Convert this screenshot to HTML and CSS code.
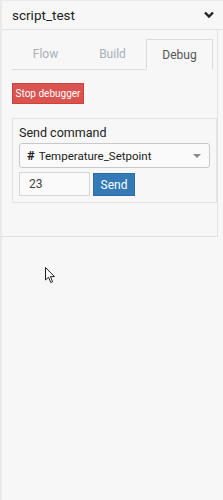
FILE: index.html
```html
<!DOCTYPE html>
<html>
<head>
<meta charset="utf-8">
<link rel="stylesheet" href="styles.css">
</head>
<body>
<div class="app">
  <div class="header">
    <span class="title">script_test</span>
    <svg class="chev" width="10" height="8" viewBox="0 0 10 8"><path d="M1 1.5 L5 5.5 L9 1.5" fill="none" stroke="#222" stroke-width="2.4"/></svg>
  </div>
  <div class="content">
    <div class="tabs">
      <div class="tab">Flow</div>
      <div class="tab">Build</div>
      <div class="tab active">Debug</div>
    </div>
    <div class="btn-row"><button class="btn-stop">Stop debugger</button></div>
    <div class="panel">
      <div class="panel-title">Send command</div>
      <div class="select">
        <span class="hash">#</span><span class="sel-text">Temperature_Setpoint</span>
        <span class="caret"></span>
      </div>
      <div class="send-row">
        <div class="input">23</div>
        <button class="btn-send">Send</button>
      </div>
    </div>
  </div>
  <svg class="cursor" width="12" height="18" viewBox="0 0 12 18"><path d="M0.5 0.5 L0.5 13 L3.5 10.2 L5.8 15.5 L7.6 14.7 L5.4 9.6 L9.5 9.6 Z" fill="#fff" stroke="#222" stroke-width="1"/></svg>
</div>
</body>
</html>
```
FILE: styles.css
```css
html, body {
  margin: 0;
  padding: 0;
  background: #f7f7f7;
}
body {
  font-family: Roboto, "Noto Sans", sans-serif;
  color: #333;
}
.app {
  position: relative;
  height: 500px;
  border-left: 2px solid #e9e9e9;
  box-sizing: border-box;
}
.header {
  height: 30px;
  box-sizing: border-box;
  border-top: 1px solid #ececec;
  border-bottom: 1px solid #e3e3e3;
  display: flex;
  align-items: center;
  justify-content: space-between;
  padding: 0 9px 0 10px;
}
.title {
  font-size: 13.5px;
  color: #222;
}
.chev { display: block; }
.content {
  width: 216px;
  box-sizing: border-box;
  border-right: 1px solid #e3e3e3;
  border-bottom: 1px solid #e0e0e0;
  padding: 9px 0 33px 10px;
}
.tabs {
  display: flex;
  width: 201px;
  border-bottom: 1px solid #dcdcdc;
  height: 30px;
}
.tab {
  flex: 1;
  height: 30px;
  box-sizing: border-box;
  display: flex;
  align-items: center;
  justify-content: center;
  font-size: 12px;
  color: #a9b0b8;
  border: 1px solid transparent;
}
.tab.active {
  color: #555;
  border-color: #dcdcdc;
  border-bottom-color: #f7f7f7;
  background: #f7f7f7;
  height: 31px;
}
.btn-row {
  margin-top: 13px;
  display: flex;
}
.btn-stop {
  height: 21px;
  width: 72px;
  padding: 0;
  border: 1px solid #d43f3a;
  background: #d9534f;
  color: #fff;
  font-family: Roboto, "Noto Sans", sans-serif;
  font-size: 10px;
  white-space: nowrap;
}
.panel {
  margin-top: 14px;
  width: 205px;
  box-sizing: border-box;
  border: 1px solid #e3e3e3;
  padding: 6px 6px 6px 6px;
}
.panel-title {
  font-size: 12.5px;
  color: #222;
  height: 16px;
  line-height: 16px;
  margin-bottom: 2px;
}
.select {
  height: 25px;
  box-sizing: border-box;
  border: 1px solid #c8c8c8;
  border-radius: 3px;
  background: #fafafa;
  display: flex;
  align-items: center;
  padding: 0 8px 0 7px;
  font-size: 11.5px;
  color: #222;
}
.hash {
  font-weight: bold;
  font-size: 13px;
  margin-right: 4px;
}
.sel-text { flex: 1; }
.caret {
  width: 0;
  height: 0;
  border-left: 4px solid transparent;
  border-right: 4px solid transparent;
  border-top: 4px solid #888;
}
.send-row {
  margin-top: 4px;
  display: flex;
  gap: 3px;
}
.input {
  width: 71px;
  height: 24px;
  box-sizing: border-box;
  border: 1px solid #d6d6d6;
  background: #fafafa;
  font-size: 12px;
  color: #444;
  display: flex;
  align-items: center;
  padding-left: 9px;
}
.btn-send {
  width: 42px;
  height: 23px;
  margin-top: 1px;
  padding: 0;
  border: 1px solid #2e6da4;
  background: #337ab7;
  color: #fff;
  font-family: Roboto, "Noto Sans", sans-serif;
  font-size: 12px;
}
.cursor {
  position: absolute;
  left: 43px;
  top: 267px;
}
```
